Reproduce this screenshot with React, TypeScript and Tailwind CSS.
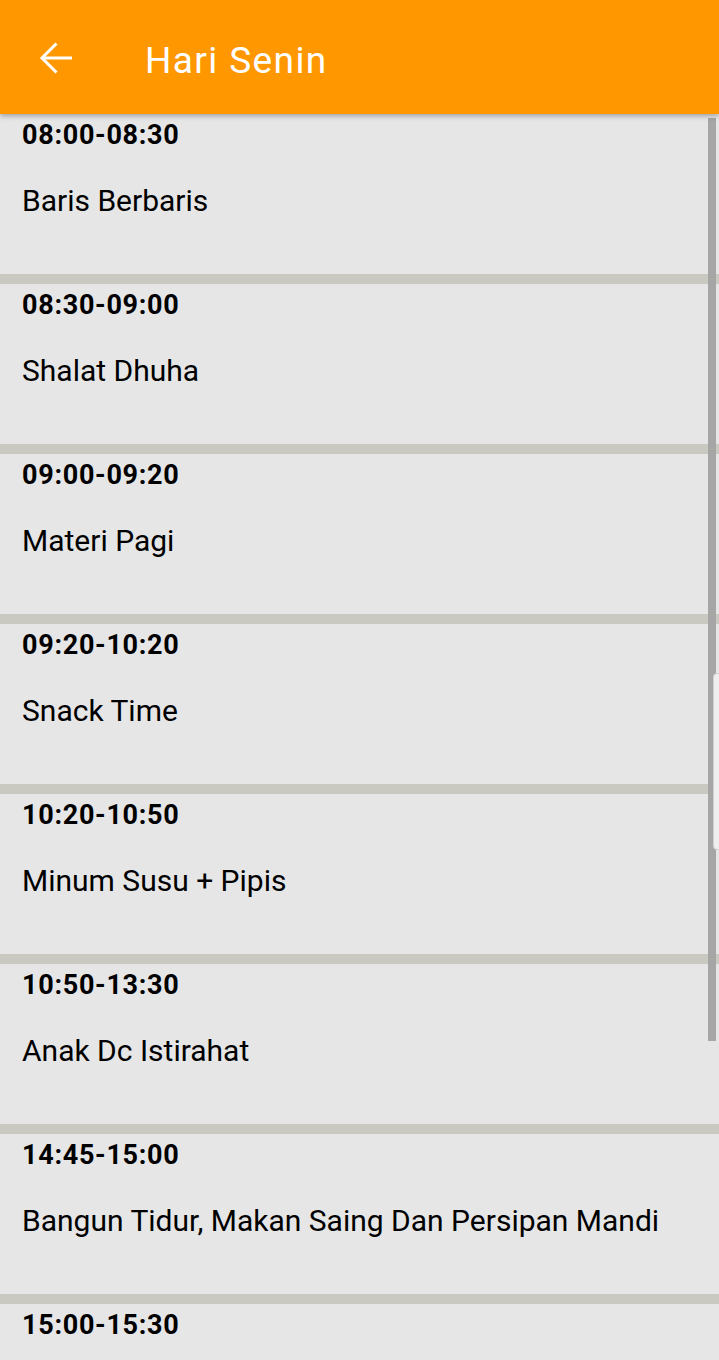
import React from "react";

const items: { time: string; activity?: string }[] = [
  { time: "08:00-08:30", activity: "Baris Berbaris" },
  { time: "08:30-09:00", activity: "Shalat Dhuha" },
  { time: "09:00-09:20", activity: "Materi Pagi" },
  { time: "09:20-10:20", activity: "Snack Time" },
  { time: "10:20-10:50", activity: "Minum Susu + Pipis" },
  { time: "10:50-13:30", activity: "Anak Dc Istirahat" },
  { time: "14:45-15:00", activity: "Bangun Tidur, Makan Saing Dan Persipan Mandi" },
  { time: "15:00-15:30" },
];

export default function App() {
  return (
    <div
      className="relative w-[719px] h-[1360px] overflow-hidden bg-[#e6e6e6]"
      style={{ fontFamily: "Roboto, 'Noto Sans', sans-serif" }}
    >
      <header className="relative z-10 h-[114px] bg-[#ff9800] flex items-center shadow-[0_2px_5px_rgba(0,0,0,0.3)]">
        <div className="w-[145px] h-full flex items-center">
          <svg
            width="34"
            height="34"
            viewBox="0 0 34 34"
            className="ml-[39px] mt-[2px]"
            fill="none"
            stroke="white"
            strokeWidth="3"
            strokeLinecap="butt"
          >
            <path d="M33 17H3" />
            <path d="M17.5 2.5L3 17l14.5 14.5" />
          </svg>
        </div>
        <h1 className="mt-[6px] text-white text-[37px] font-normal leading-none tracking-[1.4px]">
          Hari Senin
        </h1>
      </header>

      <div className="flex flex-col">
        {items.map((it, i) => (
          <div key={i} className="flex flex-col">
            <div className="h-[160px] flex flex-col pl-[22px] pt-[8px] gap-[37px] text-black">
              <div className="text-[27px] font-bold leading-[27px] tracking-[0.7px]">{it.time}</div>
              {it.activity && (
                <div className="text-[30px] leading-[30px]">{it.activity}</div>
              )}
            </div>
            <div className="h-[10px] bg-[#c9c9c1]" />
          </div>
        ))}
      </div>

      <div className="absolute left-[708px] top-[118px] w-[8px] h-[923px] bg-[#a6a6a6]" />
      <div className="absolute left-[713px] top-[673px] w-[10px] h-[177px] rounded-[4px] bg-[#efefef] border border-[#d0d0d0]" />
    </div>
  );
}
